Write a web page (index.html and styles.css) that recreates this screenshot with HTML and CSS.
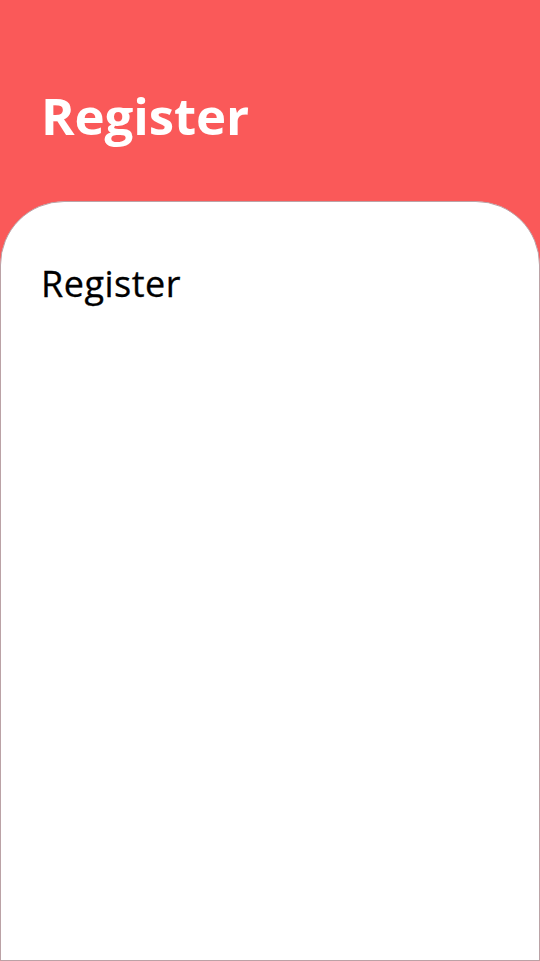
FILE: index.html
```html
<!DOCTYPE html>
<html>
<head>
<meta charset="utf-8">
<link rel="stylesheet" href="styles.css">
</head>
<body>
<div class="page">
  <header class="hero">
    <h1 class="hero-title">Register</h1>
  </header>
  <main class="card">
    <h2 class="card-title">Register</h2>
  </main>
</div>
</body>
</html>
```
FILE: styles.css
```css
html, body {
  margin: 0;
  padding: 0;
  height: 100%;
}
body {
  background: #fa5959;
  font-family: "Open Sans", "Noto Sans", sans-serif;
}
.page {
  display: flex;
  flex-direction: column;
  height: 961px;
}
.hero {
  height: 201px;
  box-sizing: border-box;
  padding: 82px 0 0 41px;
}
.hero-title {
  margin: 0;
  color: #ffffff;
  font-size: 51px;
  font-weight: 700;
  line-height: 66px;
  letter-spacing: -0.1px;
}
.card {
  flex: 1;
  background: #ffffff;
  border: 1px solid #bba2a6;
  border-radius: 64px 64px 0 0;
  padding: 58px 0 0 40px;
}
.card-title {
  margin: 0;
  color: #000000;
  font-size: 36px;
  font-weight: 400;
  line-height: 48px;
  letter-spacing: 0.5px;
  -webkit-text-stroke: 0.3px #000000;
}
```
